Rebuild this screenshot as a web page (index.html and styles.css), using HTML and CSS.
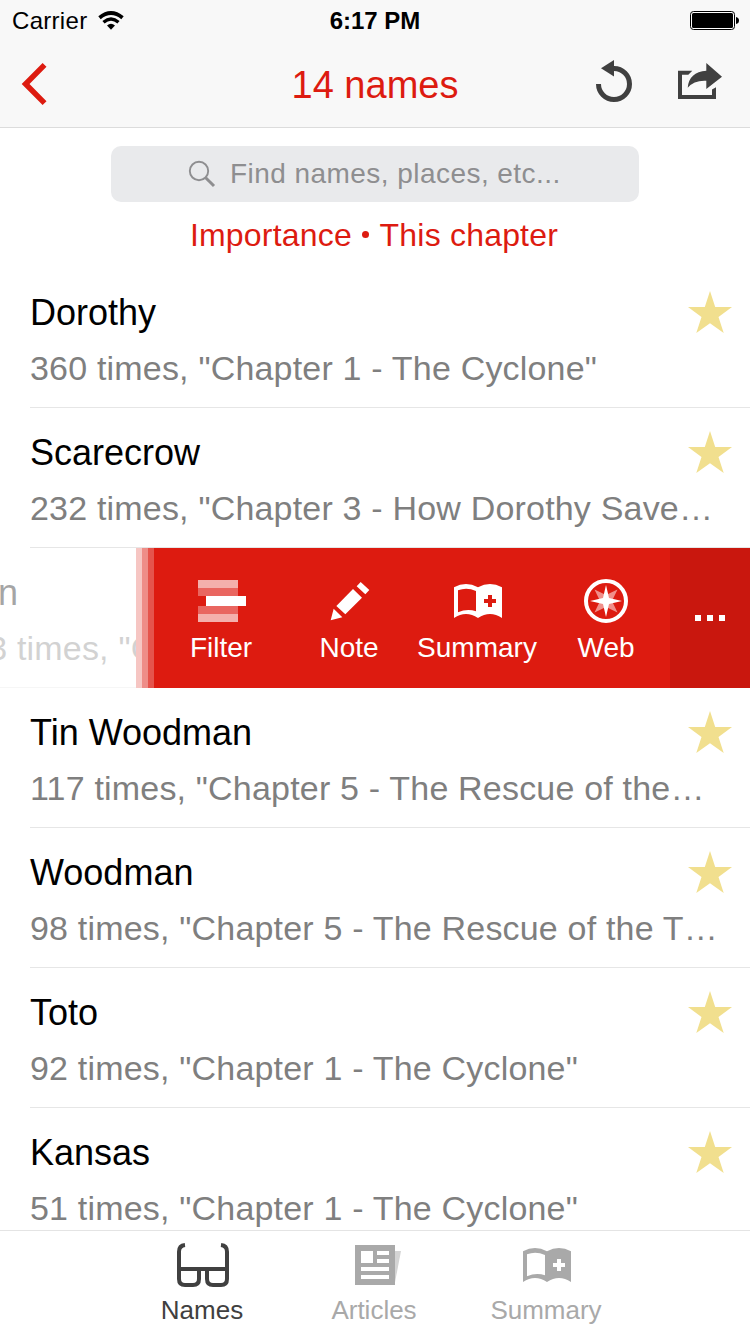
FILE: index.html
```html
<!DOCTYPE html>
<html lang="en">
<head>
<meta charset="UTF-8">
<meta name="viewport" content="width=device-width, initial-scale=1.0">
<title>Names</title>
<link rel="stylesheet" href="styles.css">
</head>
<body>

<svg class="defs" width="0" height="0">
  <symbol id="star" viewBox="0 0 44 42">
    <path d="M22 0L27.2 16H44L30.5 26L35.7 42L22 32.2L8.3 42L13.5 26L0 16H16.8Z"/>
  </symbol>
  <symbol id="book" viewBox="0 0 144 126">
    <path fill-rule="evenodd" d="M0 22Q36 2 72 22Q108 2 144 22V114Q108 90 72 114Q36 90 0 114ZM12 31V97Q40 84 66 94V33Q38 20 12 31ZM102 45V57H90V69H102V81H114V69H126V57H114V45Z"/>
  </symbol>
</svg>

<div class="app">
  <header class="header">
    <div class="status-bar">
      <div class="carrier">
        <span>Carrier</span>
        <svg width="26" height="20" viewBox="0 0 26 20" fill="none" stroke="#000">
          <path d="M1.500 6.700Q13 -2.700 24.500 6.700" stroke-width="3.800"/>
          <path d="M5.500 11.200Q13 5 20.500 11.200" stroke-width="3.400"/>
          <path d="M9 14.500Q13 11 17 14.500L13 18.800Z" fill="#000" stroke="none"/>
        </svg>
      </div>
      <div class="time">6:17 PM</div>
      <svg class="battery" width="50" height="20" viewBox="0 0 50 20">
        <rect x="0.500" y="0.500" width="44" height="18" rx="3" fill="#fff" stroke="#000"/>
        <rect x="2" y="2" width="41" height="15" rx="1.500"/>
        <path d="M46 6Q49 6.500 49 9.500Q49 12.500 46 13Z"/>
      </svg>
    </div>
    <div class="nav-bar">
      <svg class="back" width="28" height="44" viewBox="0 0 28 44">
        <path d="M1.700 22L22.600 1L26.500 4.700L9.500 22L26.500 39.300L22.600 43Z"/>
      </svg>
      <h1>14 names</h1>
      <div class="nav-actions">
        <svg width="40" height="46" viewBox="0 0 40 46">
          <path d="M4.500 26A15.500 15.500 0 1 0 20 10.500" fill="none" stroke="#404040" stroke-width="5"/>
          <path d="M7 10.300L20 2V18.500Z"/>
        </svg>
        <svg width="48" height="46" viewBox="0 -2 48 46">
          <path d="M2 10.700H16.300L12.300 14.700H6V35H36V29.500L40 27.300V39H2Z"/>
          <path d="M46 16.700L30.300 3V10.700Q13 12 11.700 27.700Q18 20 30.300 20.700V29Z"/>
        </svg>
      </div>
    </div>
  </header>

  <div class="search">
    <svg width="28" height="28" viewBox="0 0 28 28" fill="none" stroke="#8e8e90">
      <circle cx="11" cy="11" r="9.200" stroke-width="1.900"/>
      <path d="M17.700 17.700L26 26" stroke-width="3"/>
    </svg>
    <span>Find names, places, etc...</span>
  </div>
  <div class="sort">Importance <span class="dot"></span> This chapter</div>

  <div class="list">
    <div class="row">
      <div class="name">Dorothy</div>
      <div class="detail">360 times, "Chapter 1 - The Cyclone"</div>
      <svg class="star" width="44" height="42"><use href="#star"/></svg>
    </div>
    <div class="row">
      <div class="name">Scarecrow</div>
      <div class="detail">232 times, "Chapter 3 - How Dorothy Save…</div>
      <svg class="star" width="44" height="42"><use href="#star"/></svg>
    </div>
    <div class="row-open">
      <div class="row-peek">
        <div class="row faded">
          <div class="name">Lion</div>
          <div class="detail">173 times, "C</div>
        </div>
      </div>
      <div class="stripes"><i></i><i></i><i></i></div>
      <div class="actions">
        <div class="action">
          <svg width="48" height="42" viewBox="0 0 48 42">
            <path d="M0 0H40V8H0ZM0 34H40V42H0Z" fill="#f4b0ac"/>
            <path d="M0 8H40V16H0ZM0 26H40V34H0Z" fill="#e96660"/>
            <path d="M8 16H48V26H8Z"/>
          </svg>
          <span>Filter</span>
        </div>
        <div class="action">
          <svg width="40" height="42" viewBox="0 0 120 126">
            <path d="M92 6L118 30L106 43L80 19ZM69 27L96 53L46 103L19 78ZM11 86L37 112L2 121Z"/>
          </svg>
          <span>Note</span>
        </div>
        <div class="action">
          <svg width="48" height="42"><use href="#book"/></svg>
          <span>Summary</span>
        </div>
        <div class="action web">
          <svg width="44" height="44" viewBox="0 0 44 44">
            <circle cx="22" cy="22" r="20" fill="none" stroke="#fff" stroke-width="4"/>
            <path d="M10.500 10.500L22 16L33.500 10.500L28 22L33.500 33.500L22 28L10.500 33.500L16 22Z" fill="#f08f8a"/>
            <path d="M22 6L25 19L38 22L25 25L22 38L19 25L6 22L19 19Z"/>
          </svg>
          <span>Web</span>
        </div>
      </div>
      <div class="more"><i></i><i></i><i></i></div>
    </div>
    <div class="row">
      <div class="name">Tin Woodman</div>
      <div class="detail">117 times, "Chapter 5 - The Rescue of the…</div>
      <svg class="star" width="44" height="42"><use href="#star"/></svg>
    </div>
    <div class="row">
      <div class="name">Woodman</div>
      <div class="detail">98 times, "Chapter 5 - The Rescue of the T…</div>
      <svg class="star" width="44" height="42"><use href="#star"/></svg>
    </div>
    <div class="row">
      <div class="name">Toto</div>
      <div class="detail">92 times, "Chapter 1 - The Cyclone"</div>
      <svg class="star" width="44" height="42"><use href="#star"/></svg>
    </div>
    <div class="row">
      <div class="name">Kansas</div>
      <div class="detail">51 times, "Chapter 1 - The Cyclone"</div>
      <svg class="star" width="44" height="42"><use href="#star"/></svg>
    </div>
  </div>

  <nav class="tab-bar">
    <div class="tab active">
      <svg width="52" height="44" viewBox="0 0 156 132" fill="none" stroke="currentColor" stroke-width="12">
        <path d="M24 6Q6 8 6 26V108Q6 126 24 126H48Q66 126 66 108V78M6 78H150M90 78V108Q90 126 108 126H132Q150 126 150 108V26Q150 8 132 6"/>
      </svg>
      <span>Names</span>
    </div>
    <div class="tab">
      <svg class="articles" width="46" height="44" viewBox="0 -6 138 132">
        <path d="M120 18H138L120 112Z" fill="#d4d4d4"/>
        <path fill-rule="evenodd" d="M0 0H120V120H0ZM18 18V54H54V18ZM66 18V30H102V18ZM66 42V54H102V42ZM18 66V78H102V66ZM18 90V102H102V90Z"/>
      </svg>
      <span>Articles</span>
    </div>
    <div class="tab">
      <svg class="book" width="48" height="42"><use href="#book"/></svg>
      <span>Summary</span>
    </div>
  </nav>
</div>

</body>
</html>
```
FILE: styles.css
```css
* {
  box-sizing: border-box;
}
body {
  margin: 0;
  font-family: "Liberation Sans", Arial, sans-serif;
  background-color: #fff;
  color: #000;
}
svg {
  display: block;
  flex: none;
}
.defs {
  position: absolute;
}
.app {
  display: flex;
  flex-direction: column;
  width: 750px;
  height: 1334px;
  overflow: hidden;
}

/* header */
.header {
  flex: none;
  height: 128px;
  background-color: #f8f8f8;
  border-bottom: 1px solid #dcdcdc;
}
.status-bar {
  display: grid;
  grid-template-columns: 1fr auto 1fr;
  align-items: center;
  height: 40px;
  padding: 1px 10px 0 12px;
  font-size: 24px;
}
.carrier {
  display: flex;
  align-items: center;
  gap: 11px;
  letter-spacing: 0.3px;
}
.time {
  margin-right: 2px;
  font-weight: bold;
}
.battery {
  justify-self: end;
}
.nav-bar {
  display: grid;
  grid-template-columns: 1fr auto 1fr;
  align-items: center;
  height: 88px;
  padding: 0 26px 0 20px;
}
.back {
  fill: #dd1b10;
}
h1 {
  margin: 2px 0 0 6px;
  font-size: 38px;
  font-weight: normal;
  color: #dd1b10;
}
.nav-actions {
  display: flex;
  justify-content: flex-end;
  gap: 42px;
  padding-bottom: 6px;
  fill: #404040;
}

/* search */
.search {
  flex: none;
  display: flex;
  align-items: center;
  gap: 14px;
  width: 528px;
  height: 56px;
  margin: 18px auto 0;
  padding-left: 77px;
  border-radius: 10px;
  background-color: #e9eaec;
  color: #8e8e90;
  font-size: 28px;
  letter-spacing: 0.45px;
}
.sort {
  flex: none;
  height: 66px;
  padding-right: 2px;
  line-height: 66px;
  text-align: center;
  font-size: 32px;
  letter-spacing: 0.2px;
  color: #dd1b10;
}
.dot {
  display: inline-block;
  width: 7px;
  height: 7px;
  margin: 0 2px 0 1px;
  border-radius: 50%;
  background-color: #dd1b10;
  vertical-align: 8px;
}

/* list */
.list {
  flex: 1;
  min-height: 0;
  overflow: hidden;
}
.row {
  display: grid;
  grid-template-columns: 1fr 44px;
  grid-template-rows: 50px 60px;
  align-items: center;
  height: 140px;
  margin-left: 30px;
  padding: 20px 18px 0 0;
  border-bottom: 1px solid #e6e6e6;
  white-space: nowrap;
}
.name {
  grid-area: 1 / 1;
  font-size: 36px;
}
.detail {
  grid-area: 2 / 1 / 3 / 3;
  font-size: 34px;
  letter-spacing: 0.19px;
  color: #7f7f7f;
}
.star {
  grid-area: 1 / 2;
  margin-bottom: 2px;
  fill: #f1df8e;
}

/* swiped row */
.row-open {
  display: flex;
  height: 140px;
}
.row-peek {
  width: 136px;
  overflow: hidden;
}
.faded {
  width: 250px;
  margin-left: -50px;
  opacity: 0.35;
}
.stripes {
  display: flex;
}
.stripes i {
  width: 6px;
  background-color: #f6c6c3;
}
.stripes i:nth-child(2) {
  background-color: #ee8d88;
}
.stripes i:nth-child(3) {
  background-color: #e5544c;
}
.actions {
  flex: 1;
  display: grid;
  grid-template-columns: repeat(4, 128px);
  justify-content: end;
  background-color: #dd1b10;
  color: #fff;
  fill: #fff;
  font-size: 28px;
}
.action {
  display: flex;
  flex-direction: column;
  align-items: center;
  justify-content: space-between;
  padding: 32px 0 24px;
}
.web {
  padding-top: 31px;
}
.action span {
  margin-right: 2px;
}
.web span {
  margin-right: 0;
}
.more {
  display: flex;
  align-items: center;
  justify-content: center;
  gap: 6px;
  width: 80px;
  background-color: #c9170e;
}
.more i {
  width: 6px;
  height: 6px;
  background-color: #fff;
}

/* tabs */
.tab-bar {
  flex: none;
  display: grid;
  grid-template-columns: repeat(3, 172px);
  justify-content: center;
  height: 104px;
  border-top: 1px solid #e4e4e4;
  background-color: #fff;
  color: #a9a9a9;
  fill: currentColor;
  font-size: 26px;
}
.tab {
  display: flex;
  flex-direction: column;
  align-items: center;
  padding-top: 12px;
}
.articles {
  margin-left: 6px;
}
.book {
  margin-top: 1px;
}
.tab span {
  margin-top: auto;
  margin-right: 2px;
  margin-bottom: 8px;
}
.active {
  color: #404040;
}
```
